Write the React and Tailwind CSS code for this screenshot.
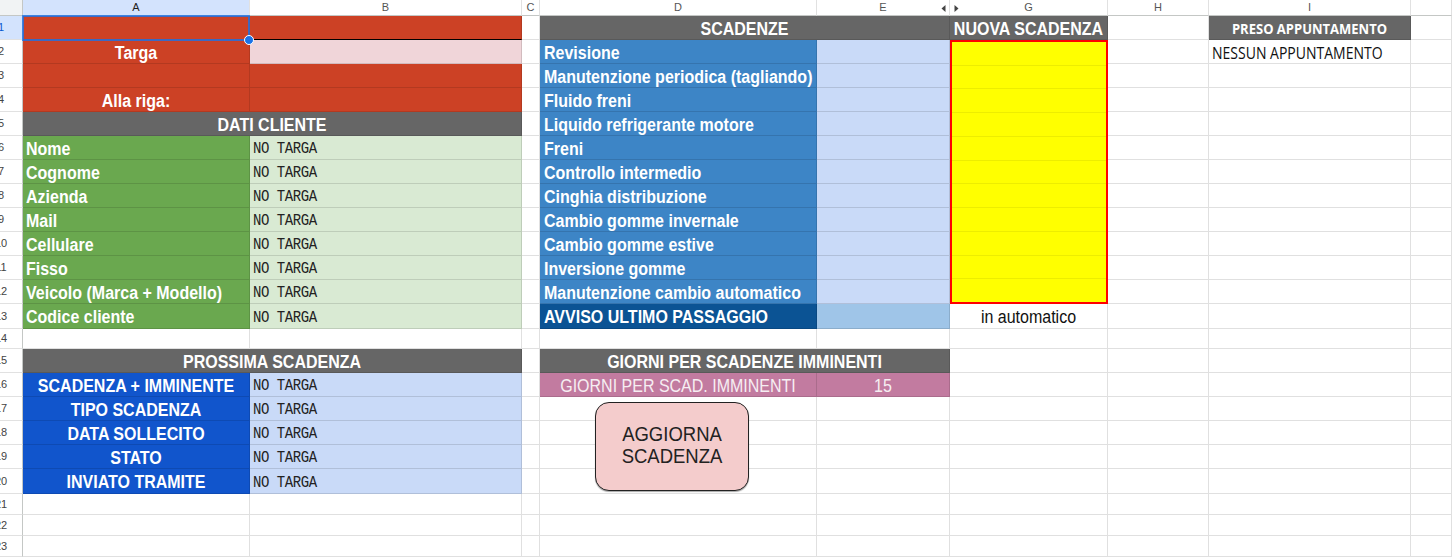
import React from 'react';

function T({ children, className = '' }) {
  return <span className={`inline-block translate-y-[1px] scale-y-[1.13] ${className}`}>{children}</span>;
}

const base = 'flex items-center overflow-hidden whitespace-nowrap border-r border-b border-black/[0.12]';

function Cell({ span2 = false, bg = 'bg-white', className = '', children }) {
  return <div className={`${span2 ? 'col-span-2' : ''} ${base} ${bg} ${className}`}>{children}</div>;
}

const W = 'font-bold text-[16px] text-white';
const MONO = "font-['Liberation_Mono',monospace] text-[14px] tracking-[-0.45px] text-[#222] translate-y-[2px]";

function RH({ n, sel = false }) {
  return (
    <div className={`flex items-center overflow-hidden border-r border-b border-r-[#c4c7c5] border-b-[#e1e1e1] text-[11px] ${sel ? 'bg-[#d3e3fd] text-[#0b57d0]' : 'bg-white text-[#444]'}`}>
      <span className="-ml-[22px] w-[46px] shrink-0 text-center">{n}</span>
    </div>
  );
}

function CH({ children, sel = false, className = '' }) {
  return (
    <div className={`relative flex items-center justify-center border-r border-b border-r-[#e1e1e1] border-b-[#c4c7c5] text-[11px] ${sel ? 'bg-[#d3e3fd] text-[#1f1f1f]' : 'bg-white text-[#555]'} ${className}`}>
      {children}
    </div>
  );
}

function Blank() {
  return <Cell />;
}

const aGreen = ['Nome', 'Cognome', 'Azienda', 'Mail', 'Cellulare', 'Fisso', 'Veicolo (Marca + Modello)', 'Codice cliente'];
const dBlue = [
  'Revisione',
  'Manutenzione periodica (tagliando)',
  'Fluido freni',
  'Liquido refrigerante motore',
  'Freni',
  'Controllo intermedio',
  'Cinghia distribuzione',
  'Cambio gomme invernale',
  'Cambio gomme estive',
  'Inversione gomme',
  'Manutenzione cambio automatico',
];
const aBlue = ['SCADENZA + IMMINENTE', 'TIPO SCADENZA', 'DATA SOLLECITO', 'STATO', 'INVIATO TRAMITE'];

function DCell({ i }) {
  return (
    <>
      <Cell bg="bg-[#3d85c6]" className="pl-[4px]"><T className={W}>{dBlue[i]}</T></Cell>
      <Cell bg="bg-[#c9daf8]" />
    </>
  );
}

function ACell({ r }) {
  if (r === 1)
    return (
      <>
        <Cell bg="bg-[#cc4125]" />
        <Cell bg="bg-[#cc4125]" className="border-b-black" />
      </>
    );
  if (r === 2)
    return (
      <>
        <Cell bg="bg-[#cc4125]" className="justify-center"><T className={W}>Targa</T></Cell>
        <Cell bg="bg-[#f0d5d9]" />
      </>
    );
  if (r === 3)
    return (
      <>
        <Cell bg="bg-[#cc4125]" />
        <Cell bg="bg-[#cc4125]" />
      </>
    );
  if (r === 4)
    return (
      <>
        <Cell bg="bg-[#cc4125]" className="justify-center"><T className={W}>Alla riga:</T></Cell>
        <Cell bg="bg-[#cc4125]" />
      </>
    );
  if (r === 5)
    return (
      <Cell span2 bg="bg-[#666666]" className="justify-center"><T className={W}>DATI CLIENTE</T></Cell>
    );
  return (
    <>
      <Cell bg="bg-[#6aa84f]" className="pl-[3px]"><T className={W}>{aGreen[r - 6]}</T></Cell>
      <Cell bg="bg-[#d9ead3]" className="pl-[3px]"><T className={MONO}>NO TARGA</T></Cell>
    </>
  );
}

export default function App() {
  const rowsTop = [];
  for (let r = 3; r <= 12; r++) {
    rowsTop.push(
      <React.Fragment key={r}>
        <RH n={r} />
        <ACell r={r} />
        <Blank />
        <DCell i={r - 2} />
        <Blank />
        <Blank />
        <Blank />
      </React.Fragment>
    );
  }

  const rowsBlue = aBlue.map((label, i) => (
    <React.Fragment key={'b' + i}>
      <RH n={16 + i} />
      <Cell bg="bg-[#1155cc]" className="justify-center"><T className={W}>{label}</T></Cell>
      <Cell bg="bg-[#c9daf8]" className="pl-[3px]"><T className={MONO}>NO TARGA</T></Cell>
      <Blank />
      {i === 0 ? (
        <>
          <Cell bg="bg-[#c27ba0]" className="justify-center"><T className="text-[16px] text-[#f6eef2]">GIORNI PER SCAD. IMMINENTI</T></Cell>
          <Cell bg="bg-[#c27ba0]" className="justify-center"><T className="text-[16px] text-[#f6eef2]">15</T></Cell>
        </>
      ) : (
        <>
          <Blank />
          <Blank />
        </>
      )}
      <Blank />
      <Blank />
      <Blank />
      <Blank />
    </React.Fragment>
  ));

  const blankRow = (n) => (
    <React.Fragment key={'z' + n}>
      <RH n={n} />
      {Array.from({ length: 9 }).map((_, k) => (
        <Blank key={k} />
      ))}
    </React.Fragment>
  );

  return (
    <div className="relative h-[557px] w-[1452px] overflow-hidden bg-white font-['Liberation_Sans',Arial,sans-serif]">
      <div className="grid grid-cols-[23px_227px_272px_18px_277px_133px_158px_101px_202px_41px] grid-rows-[16px_repeat(12,24px)_25px_20px_24px_24px_24px_24px_24px_25px_21px_21px_21px]">
        {/* header row */}
        <div className="border-r border-b border-r-[#c4c7c5] border-b-[#c4c7c5] bg-[#f1f3f4]" />
        <CH sel>A</CH>
        <CH>B</CH>
        <CH>C</CH>
        <CH>D</CH>
        <CH>
          E
          <svg className="absolute right-[3px] top-[5px]" width="5" height="7" viewBox="0 0 5 7"><path d="M4.5 0 L0.5 3.5 L4.5 7 Z" fill="#444" /></svg>
        </CH>
        <CH>
          G
          <svg className="absolute left-[4px] top-[5px]" width="5" height="7" viewBox="0 0 5 7"><path d="M0.5 0 L4.5 3.5 L0.5 7 Z" fill="#444" /></svg>
        </CH>
        <CH>H</CH>
        <CH>I</CH>
        <CH />

        {/* row 1 */}
        <RH n={1} sel />
        <ACell r={1} />
        <Blank />
        <Cell span2 bg="bg-[#666666]" className="justify-center"><T className={W}>SCADENZE</T></Cell>
        <Cell bg="bg-[#666666]" className="justify-center"><T className={W}>NUOVA SCADENZA</T></Cell>
        <Blank />
        <Cell bg="bg-[#666666]" className="justify-center"><T className="font-['Open_Sans',sans-serif] text-[13px] font-bold text-white">PRESO APPUNTAMENTO</T></Cell>
        <Blank />

        {/* row 2 */}
        <RH n={2} />
        <ACell r={2} />
        <Blank />
        <DCell i={0} />
        <div className="row-span-11 flex flex-col border-2 border-[#ff0000] bg-[#ffff00]">
          {Array.from({ length: 11 }).map((_, k) => (
            <div key={k} className={`flex-1 ${k < 10 ? 'border-b border-black/[0.07]' : ''}`} />
          ))}
        </div>
        <Blank />
        <Cell className="pl-[3px]"><T className="font-['Open_Sans',sans-serif] text-[14px] text-[#111]">NESSUN APPUNTAMENTO</T></Cell>
        <Blank />

        {rowsTop}

        {/* row 13 */}
        <RH n={13} />
        <ACell r={13} />
        <Blank />
        <Cell bg="bg-[#0b5394]" className="pl-[4px]"><T className={W}>AVVISO ULTIMO PASSAGGIO</T></Cell>
        <Cell bg="bg-[#9fc5e8]" />
        <Cell className="justify-center"><T className="text-[16px] text-[#111]">in automatico</T></Cell>
        <Blank />
        <Blank />
        <Blank />

        {/* row 14 */}
        {blankRow(14)}

        {/* row 15 */}
        <RH n={15} />
        <Cell span2 bg="bg-[#666666]" className="justify-center"><T className={W}>PROSSIMA SCADENZA</T></Cell>
        <Blank />
        <Cell span2 bg="bg-[#666666]" className="justify-center"><T className={W}>GIORNI PER SCADENZE IMMINENTI</T></Cell>
        <Blank />
        <Blank />
        <Blank />
        <Blank />

        {rowsBlue}

        {blankRow(21)}
        {blankRow(22)}
        {blankRow(23)}
      </div>

      {/* selection outline on A1 */}
      <div className="pointer-events-none absolute left-[22px] top-[15px] h-[26px] w-[228px] border-2 border-[#1a73e8]/80" />
      <div className="absolute left-[244px] top-[35px] h-[10px] w-[10px] rounded-full border border-white bg-[#1a73e8]" />

      {/* drawing button */}
      <div className="absolute left-[595px] top-[402px] flex h-[89px] w-[154px] flex-col items-center justify-center rounded-[14px] border border-[#222] bg-[#f4cccc] pb-[3px] text-[18.5px] leading-[22px] text-[#222] shadow-[0_1px_1px_rgba(0,0,0,0.35)]">
        <span className="inline-block scale-y-[1.13]">AGGIORNA</span>
        <span className="inline-block scale-y-[1.13]">SCADENZA</span>
      </div>
    </div>
  );
}
